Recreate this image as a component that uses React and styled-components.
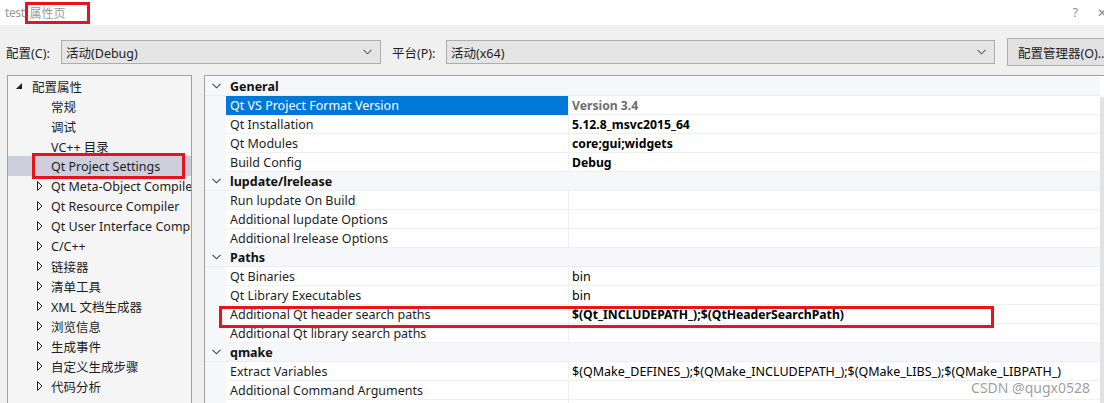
import React from "react";
import styled, { createGlobalStyle } from "styled-components";

const Global = createGlobalStyle`
  html, body { margin: 0; padding: 0; background: #f0f0f0; }
  body {
    font-family: "Noto Sans", "Noto Sans CJK SC", sans-serif;
    font-size: 12.5px;
    color: #1e1e1e;
  }
  #root { width: 1104px; height: 403px; overflow: hidden; }
`;

const Window = styled.div`
  width: 1104px;
  height: 403px;
  display: flex;
  flex-direction: column;
  background: #f0f0f0;
  overflow: hidden;
`;

const TitleBar = styled.div`
  height: 25px;
  background: #fff;
  display: flex;
  align-items: center;
  padding-left: 5px;
  color: #9a9a9a;
  font-size: 12px;
`;

const TitleApp = styled.span`
  letter-spacing: -0.4px;
`;

const TitleBox = styled.span`
  display: inline-flex;
  align-items: center;
  height: 16px;
  margin-left: 0;
  padding: 0 21px 0 2px;
  border: 3px solid #e8141c;
`;

const TitleButtons = styled.div`
  margin-left: auto;
  display: flex;
  gap: 19px;
  color: #8a8a8a;
  font-size: 12px;
  margin-right: -3px;
`;

const ConfigBar = styled.div`
  height: 50px;
  display: flex;
  align-items: center;
  padding-left: 6px;
  padding-top: 4px;
  box-sizing: border-box;
`;

const Label = styled.span`
  width: ${(p) => p.$w}px;
  flex: none;
  white-space: nowrap;
`;

const Combo = styled.div`
  width: ${(p) => p.$w}px;
  height: 24px;
  flex: none;
  box-sizing: border-box;
  border: 1px solid #adadad;
  background: #e5e5e5;
  display: flex;
  align-items: center;
  padding: 0 8px 0 4px;
  margin-right: 11px;
`;

const ComboText = styled.span`
  flex: 1;
`;

const Button = styled.div`
  height: 28px;
  flex: none;
  box-sizing: border-box;
  border: 1px solid #adadad;
  background: #e1e1e1;
  display: flex;
  align-items: center;
  padding: 0 10px;
  margin-left: 1px;
  white-space: nowrap;
`;

const Body = styled.div`
  position: relative;
  flex: 1;
  display: flex;
  padding-left: 7px;
  gap: 12px;
  overflow: hidden;
`;

const TreePanel = styled.div`
  width: 185px;
  flex: none;
  box-sizing: border-box;
  border: 1px solid #a0a0a0;
  border-bottom: none;
  background: #f5f5f5;
  overflow: hidden;
  height: 360px;
`;

const TreeRow = styled.div`
  position: relative;
  height: 20px;
  display: flex;
  align-items: center;
  padding-left: ${(p) => (p.$level === 0 ? 6 : 25)}px;
  white-space: nowrap;
  background: ${(p) => (p.$selected ? "#cccedb" : "transparent")};
`;

const Twisty = styled.span`
  width: 18px;
  flex: none;
  display: flex;
  align-items: center;
  padding-left: ${(p) => (p.$level === 0 ? 2 : 4)}px;
  box-sizing: border-box;
`;

const Callout = styled.div`
  position: absolute;
  border: 3px solid #e8141c;
  pointer-events: none;
  top: ${(p) => p.$top}px;
  left: ${(p) => p.$left}px;
  width: ${(p) => p.$width}px;
  height: ${(p) => p.$height}px;
  box-sizing: border-box;
`;

const GridPanel = styled.div`
  flex: 1;
  display: flex;
  border-top: 1px solid #a0a0a0;
  border-left: 1px solid #a0a0a0;
  background: #fff;
  height: 360px;
  overflow: hidden;
`;

const Grid = styled.div`
  position: relative;
  flex: 1;
  padding-top: 1px;
`;

const Scrollbar = styled.div`
  width: 4px;
  margin-top: 21px;
  background: #e2e2e2;
`;

const CategoryRow = styled.div`
  height: 19px;
  box-sizing: border-box;
  display: flex;
  align-items: center;
  background: #f5f7fa;
  border-bottom: 1px solid #eceef1;
  font-weight: 700;
  color: #111;
`;

const Chevron = styled.span`
  width: 25px;
  flex: none;
  display: flex;
  align-items: center;
  padding-left: 7px;
  box-sizing: border-box;
`;

const PropRow = styled.div`
  height: 19px;
  display: grid;
  grid-template-columns: 21px 342px 1fr;
`;

const Gutter = styled.div`
  background: #f5f7fa;
`;

const NameCell = styled.div`
  box-sizing: border-box;
  padding-left: 4px;
  display: flex;
  align-items: center;
  white-space: nowrap;
  border-bottom: 1px solid ${(p) => (p.$selected ? "#0078d7" : "#f0f0f0")};
  background: ${(p) => (p.$selected ? "#0078d7" : "#fff")};
  color: ${(p) => (p.$selected ? "#fff" : "#1e1e1e")};
`;

const ValueCell = styled.div`
  box-sizing: border-box;
  padding-left: 3px;
  display: flex;
  align-items: center;
  white-space: nowrap;
  border-left: 1px solid #f0f0f0;
  border-bottom: 1px solid #f0f0f0;
  font-weight: ${(p) => (p.$bold ? 700 : 400)};
  font-size: ${(p) => (p.$bold ? "12.2px" : "12.5px")};
  color: ${(p) => (p.$muted ? "#6d6d6d" : "#000")};
`;

const Watermark = styled.div`
  position: absolute;
  right: 14px;
  bottom: 8px;
  line-height: 14px;
  color: rgba(140, 140, 140, 0.85);
  font-size: 14px;
`;

const ExpandedIcon = () => (
  <svg width="6" height="6" viewBox="0 0 6 6">
    <polygon points="6,0 6,6 0,6" fill="#1e1e1e" />
  </svg>
);

const CollapsedIcon = () => (
  <svg width="6" height="10" viewBox="0 0 6 10">
    <polygon points="0.5,0.5 5,5 0.5,9.5" fill="none" stroke="#1e1e1e" strokeWidth="1" />
  </svg>
);

const DownChevron = ({ color = "#555" }) => (
  <svg width="9" height="6" viewBox="0 0 9 6">
    <polyline points="0.5,0.8 4.5,4.8 8.5,0.8" fill="none" stroke={color} strokeWidth="1.1" />
  </svg>
);

const tree = [
  { label: "配置属性", level: 0, icon: "expanded" },
  { label: "常规", level: 1 },
  { label: "调试", level: 1 },
  { label: "VC++ 目录", level: 1 },
  { label: "Qt Project Settings", level: 1, selected: true },
  { label: "Qt Meta-Object Compiler", level: 1, icon: "collapsed" },
  { label: "Qt Resource Compiler", level: 1, icon: "collapsed" },
  { label: "Qt User Interface Compiler", level: 1, icon: "collapsed" },
  { label: "C/C++", level: 1, icon: "collapsed" },
  { label: "链接器", level: 1, icon: "collapsed" },
  { label: "清单工具", level: 1, icon: "collapsed" },
  { label: "XML 文档生成器", level: 1, icon: "collapsed" },
  { label: "浏览信息", level: 1, icon: "collapsed" },
  { label: "生成事件", level: 1, icon: "collapsed" },
  { label: "自定义生成步骤", level: 1, icon: "collapsed" },
  { label: "代码分析", level: 1, icon: "collapsed" },
];

const grid = [
  {
    name: "General",
    props: [
      { name: "Qt VS Project Format Version", value: "Version 3.4", bold: true, muted: true, selected: true },
      { name: "Qt Installation", value: "5.12.8_msvc2015_64", bold: true },
      { name: "Qt Modules", value: "core;gui;widgets", bold: true },
      { name: "Build Config", value: "Debug", bold: true },
    ],
  },
  {
    name: "lupdate/lrelease",
    props: [
      { name: "Run lupdate On Build", value: "" },
      { name: "Additional lupdate Options", value: "" },
      { name: "Additional lrelease Options", value: "" },
    ],
  },
  {
    name: "Paths",
    props: [
      { name: "Qt Binaries", value: "bin" },
      { name: "Qt Library Executables", value: "bin" },
      { name: "Additional Qt header search paths", value: "$(Qt_INCLUDEPATH_);$(QtHeaderSearchPath)", bold: true },
      { name: "Additional Qt library search paths", value: "" },
    ],
  },
  {
    name: "qmake",
    props: [
      { name: "Extract Variables", value: "$(QMake_DEFINES_);$(QMake_INCLUDEPATH_);$(QMake_LIBS_);$(QMake_LIBPATH_)" },
      { name: "Additional Command Arguments", value: "" },
      { name: "", value: "" },
    ],
  },
];

export default function App() {
  return (
    <>
      <Global />
      <Window>
        <TitleBar>
          <TitleApp>test</TitleApp>
          <TitleBox>属性页</TitleBox>
          <TitleButtons>
            <span>?</span>
            <span>✕</span>
          </TitleButtons>
        </TitleBar>

        <ConfigBar>
          <Label $w={55}>配置(C):</Label>
          <Combo $w={320}>
            <ComboText>活动(Debug)</ComboText>
            <DownChevron color="#606060" />
          </Combo>
          <Label $w={54}>平台(P):</Label>
          <Combo $w={549}>
            <ComboText>活动(x64)</ComboText>
            <DownChevron color="#606060" />
          </Combo>
          <Button>配置管理器(O)...</Button>
        </ConfigBar>

        <Body>
          <TreePanel>
            {tree.map((t) => (
              <TreeRow key={t.label} $level={t.level} $selected={t.selected}>
                <Twisty $level={t.level}>
                  {t.icon === "expanded" && <ExpandedIcon />}
                  {t.icon === "collapsed" && <CollapsedIcon />}
                </Twisty>
                <span>{t.label}</span>
                {t.selected && <Callout $top={-3} $left={24} $width={153} $height={26} />}
              </TreeRow>
            ))}
          </TreePanel>

          <GridPanel>
            <Grid>
              {grid.map((cat) => (
                <React.Fragment key={cat.name}>
                  <CategoryRow>
                    <Chevron>
                      <DownChevron color="#444" />
                    </Chevron>
                    <span>{cat.name}</span>
                  </CategoryRow>
                  {cat.props.map((p, i) => (
                    <PropRow key={cat.name + i}>
                      <Gutter />
                      <NameCell $selected={p.selected}>{p.name}</NameCell>
                      <ValueCell $bold={p.bold} $muted={p.muted}>
                        {p.value}
                      </ValueCell>
                    </PropRow>
                  ))}
                </React.Fragment>
              ))}
              <Callout $top={230} $left={14} $width={775} $height={22} />
            </Grid>
            <Scrollbar />
          </GridPanel>
          <Watermark>CSDN @qugx0528</Watermark>
        </Body>
      </Window>
    </>
  );
}
